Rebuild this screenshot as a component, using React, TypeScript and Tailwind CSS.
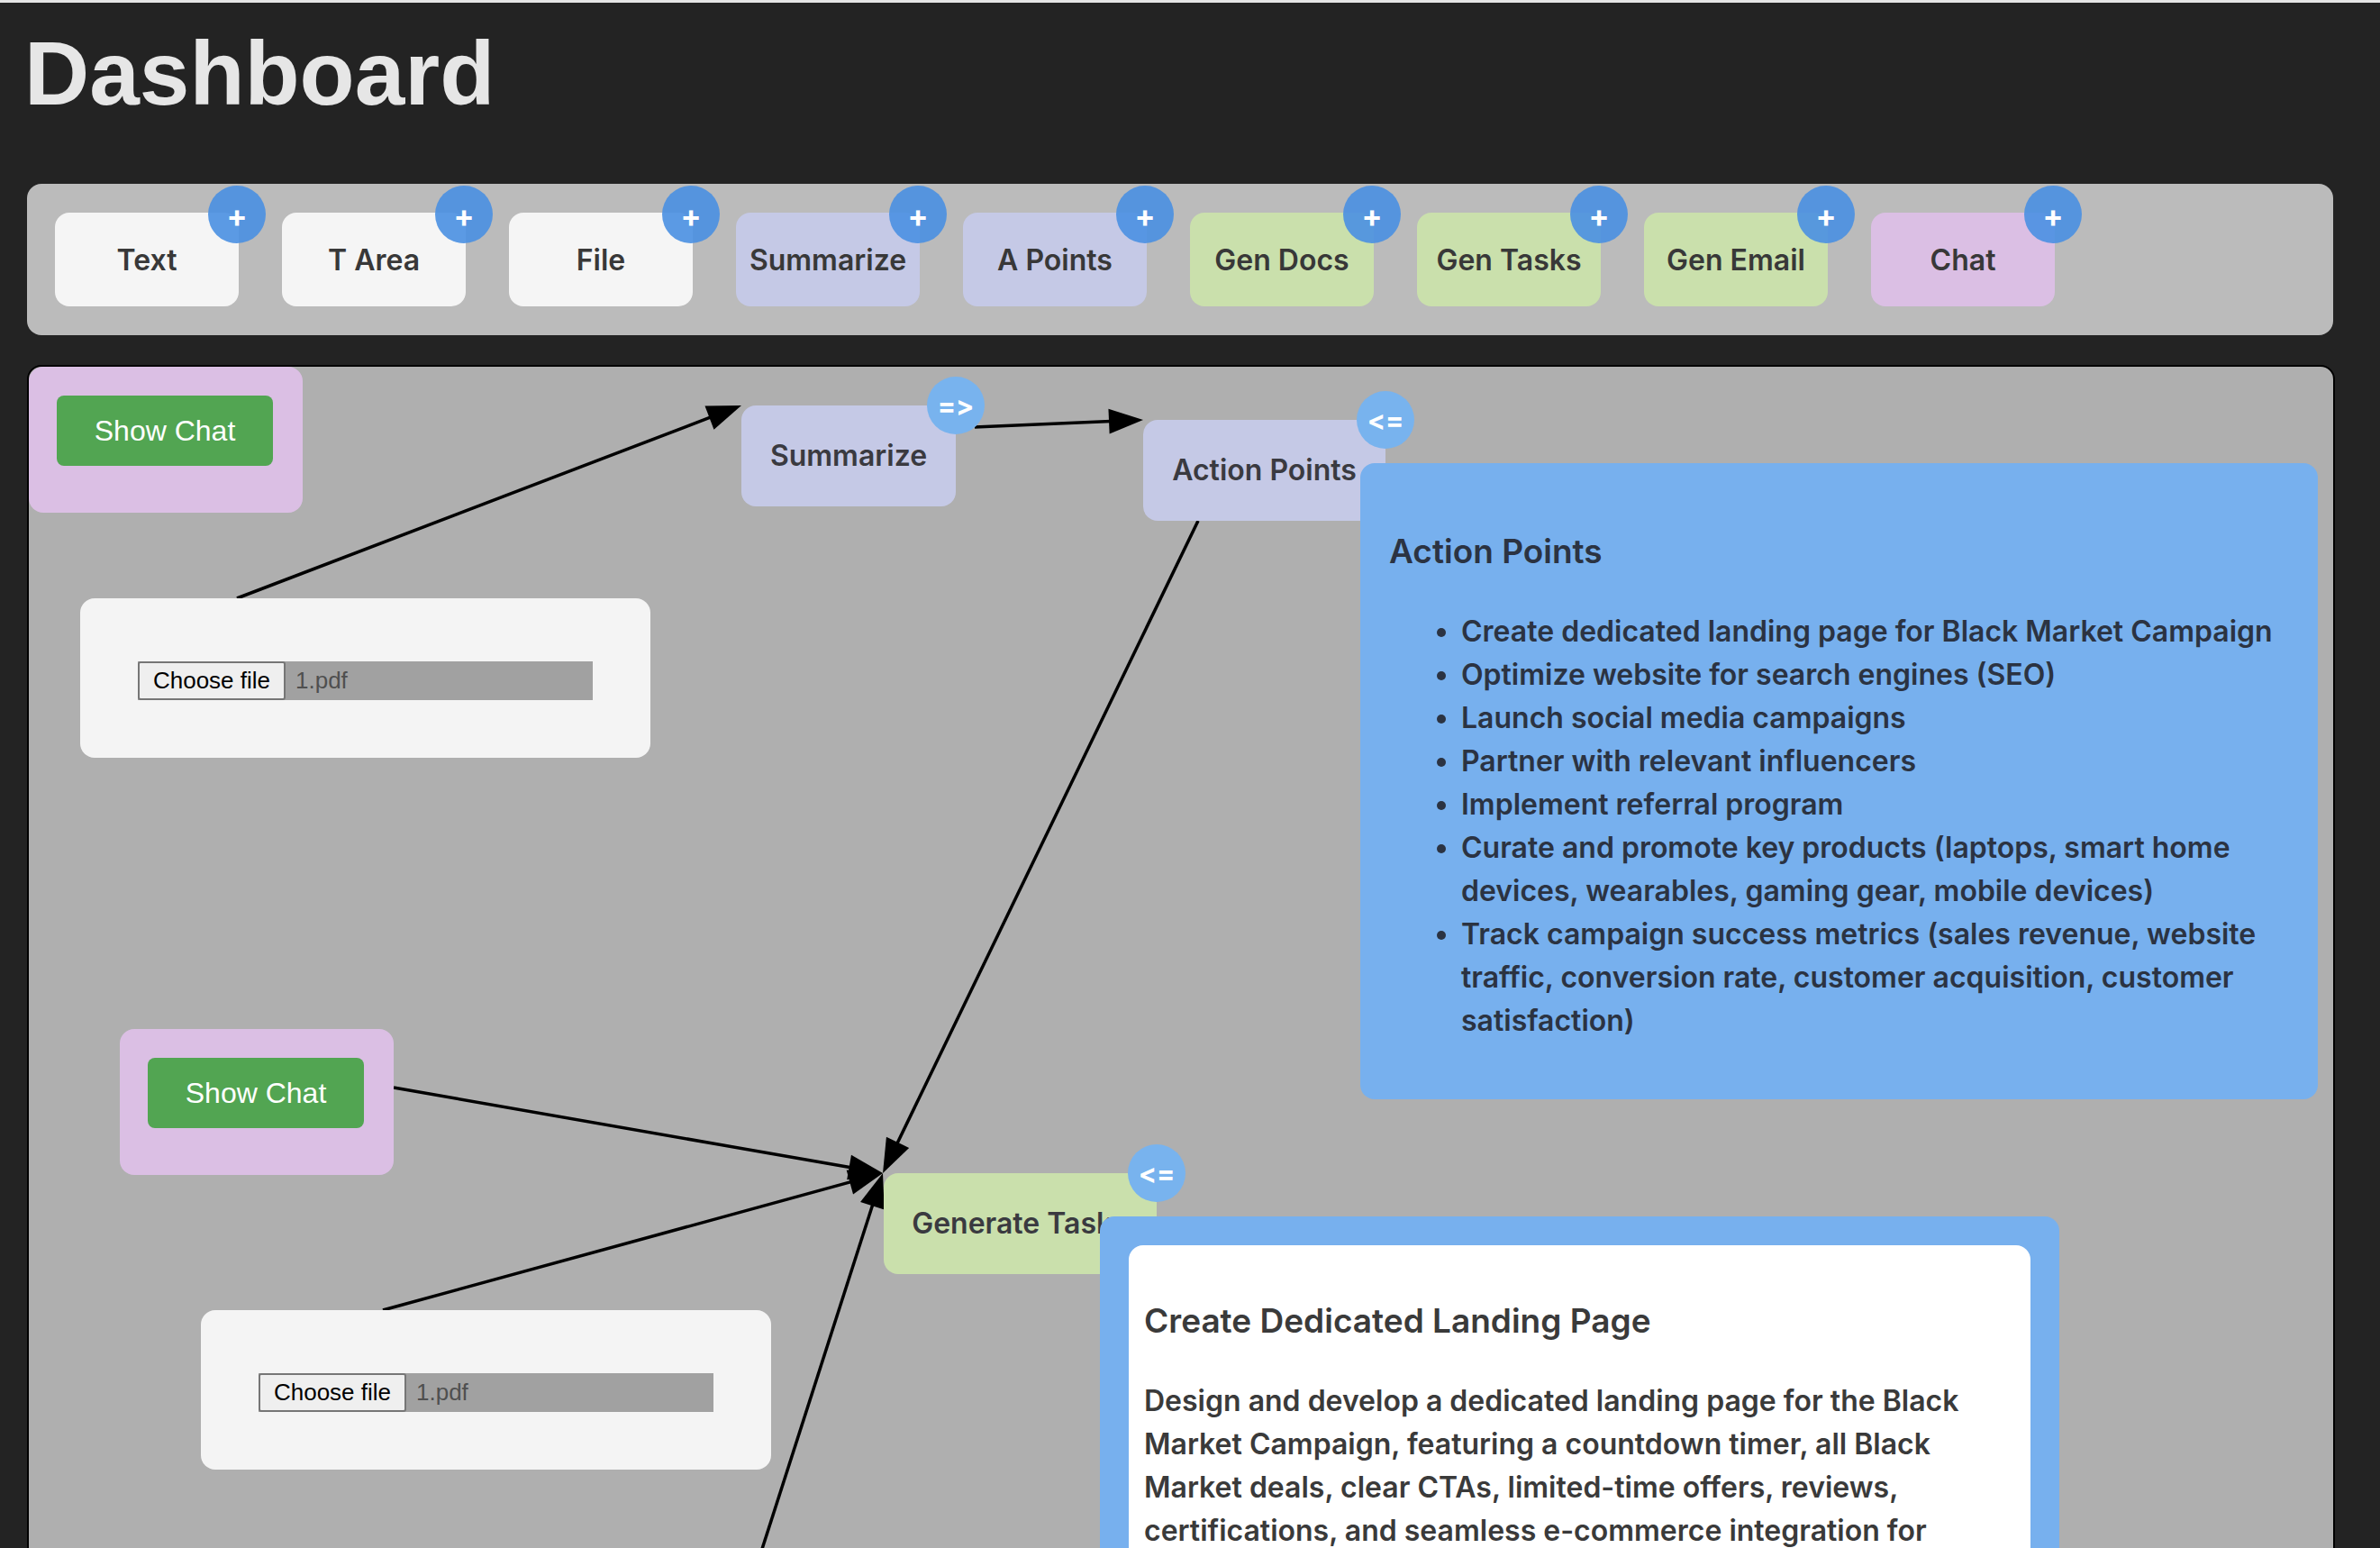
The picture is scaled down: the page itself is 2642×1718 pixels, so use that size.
import React from "react";

type Tool = { label: string; bg: string };

const TOOLS: Tool[] = [
  { label: "Text", bg: "bg-[#f5f5f5]" },
  { label: "T Area", bg: "bg-[#f5f5f5]" },
  { label: "File", bg: "bg-[#f5f5f5]" },
  { label: "Summarize", bg: "bg-[#c5c9e6]" },
  { label: "A Points", bg: "bg-[#c5c9e6]" },
  { label: "Gen Docs", bg: "bg-[#cae0ac]" },
  { label: "Gen Tasks", bg: "bg-[#cae0ac]" },
  { label: "Gen Email", bg: "bg-[#cae0ac]" },
  { label: "Chat", bg: "bg-[#dbbfe4]" },
];

const ACTION_POINTS = [
  "Create dedicated landing page for Black Market Campaign",
  "Optimize website for search engines (SEO)",
  "Launch social media campaigns",
  "Partner with relevant influencers",
  "Implement referral program",
  "Curate and promote key products (laptops, smart home devices, wearables, gaming gear, mobile devices)",
  "Track campaign success metrics (sales revenue, website traffic, conversion rate, customer acquisition, customer satisfaction)",
];

// edges in canvas coordinates: [x1, y1, x2, y2]
const EDGES: [number, number, number, number][] = [
  [231, 257, 791, 43],
  [1050, 67, 1237, 59],
  [1298, 171, 948, 895],
  [405, 800, 948, 895],
  [393, 1047, 948, 895],
  [788, 1393, 948, 895],
];

function arrowHead(x1: number, y1: number, x2: number, y2: number) {
  const len = Math.hypot(x2 - x1, y2 - y1);
  const ux = (x2 - x1) / len;
  const uy = (y2 - y1) / len;
  const bx = x2 - ux * 38;
  const by = y2 - uy * 38;
  const px = -uy * 14;
  const py = ux * 14;
  return `${x2},${y2} ${bx + px},${by + py} ${bx - px},${by - py}`;
}

function ShowChatNode({ x, y }: { x: number; y: number }) {
  return (
    <div
      className="absolute w-[304px] h-[162px] rounded-2xl bg-[#dbbfe4] pl-[31px] pt-[32px]"
      style={{ left: x, top: y }}
    >
      <button className="w-[240px] h-[78px] rounded-lg bg-[#52a552] text-white text-[32px] font-['Liberation_Sans',sans-serif]">
        Show Chat
      </button>
    </div>
  );
}

function FileNode({ x, y }: { x: number; y: number }) {
  return (
    <div
      className="absolute w-[633px] h-[177px] rounded-2xl bg-[#f4f4f4] px-[64px] pt-[70px]"
      style={{ left: x, top: y }}
    >
      <div className="flex items-center h-[43px] bg-[#a1a1a1] font-['Liberation_Sans',sans-serif] text-[26px]">
        <span className="h-full w-[164px] flex items-center justify-center bg-[#efefef] border-2 border-[#767676] rounded-[3px] text-black">
          Choose file
        </span>
        <span className="ml-[11px] text-[#4f4f4f]">1.pdf</span>
      </div>
    </div>
  );
}

function FlowNode({
  x,
  y,
  w,
  label,
  bg,
  badge,
}: {
  x: number;
  y: number;
  w: number;
  label: string;
  bg: string;
  badge: string;
}) {
  return (
    <div
      className={`absolute h-[112px] rounded-2xl flex items-center justify-center ${bg}`}
      style={{ left: x, top: y, width: w }}
    >
      <span className="text-[32px] font-semibold text-[#3a3a40] whitespace-nowrap">{label}</span>
      <span className="absolute -right-[32px] -top-[32px] w-[64px] h-[64px] rounded-full bg-[#78b3ee] flex items-center justify-center text-white text-[30px] font-bold z-20 [font-feature-settings:'calt'_0] [font-variant-ligatures:none]">
        {badge}
      </span>
    </div>
  );
}

export default function App() {
  return (
    <div className="w-[2642px] h-[1718px] overflow-hidden bg-[#232323] font-['Inter',sans-serif]">
      <div className="h-[3px] bg-[#e5e5e5]" />
      <h1 className="mt-[28px] ml-[27px] text-[100px] leading-none font-bold text-[#e6e6e6] font-['Liberation_Sans',sans-serif]">
        Dashboard
      </h1>

      <div className="mt-[73px] ml-[30px] w-[2560px] h-[168px] rounded-2xl bg-[#bbbbbb] flex gap-[48px] pl-[31px] pt-[32px]">
        {TOOLS.map((t) => (
          <div
            key={t.label}
            className={`relative w-[204px] h-[104px] rounded-2xl flex items-center justify-center ${t.bg}`}
          >
            <span className="text-[32px] font-semibold text-[#383838] pt-[2px]">{t.label}</span>
            <span className="absolute -right-[30px] -top-[30px] w-[64px] h-[64px] rounded-full bg-[#4a90e2]/90 flex items-center justify-center text-white text-[34px] font-bold leading-none pt-[4px]">
              +
            </span>
          </div>
        ))}
      </div>

      <div className="relative mt-[33px] ml-[30px] w-[2562px] h-[1400px] rounded-2xl border-2 border-black bg-[#afafaf] overflow-hidden">
        <svg className="absolute inset-0 w-full h-full" viewBox="0 0 2558 1396">
          {EDGES.map(([x1, y1, x2, y2], i) => {
            const len = Math.hypot(x2 - x1, y2 - y1);
            const ex = x2 - ((x2 - x1) / len) * 30;
            const ey = y2 - ((y2 - y1) / len) * 30;
            return (
              <g key={i}>
                <line x1={x1} y1={y1} x2={ex} y2={ey} stroke="black" strokeWidth={3.5} />
                <polygon points={arrowHead(x1, y1, x2, y2)} fill="black" />
              </g>
            );
          })}
        </svg>

        <ShowChatNode x={0} y={0} />
        <FileNode x={57} y={257} />
        <FlowNode x={791} y={43} w={238} label="Summarize" bg="bg-[#c5c9e6]" badge="=>" />
        <FlowNode x={1237} y={59} w={269} label="Action Points" bg="bg-[#c5c9e6]" badge="<=" />

        <div className="absolute left-[1478px] top-[107px] w-[1063px] h-[706px] rounded-2xl bg-[#77b0ee] px-[32px] text-[#2b3342] z-10">
          <h3 className="mt-[75px] text-[37px] leading-[45px] font-semibold">Action Points</h3>
          <ul className="mt-[43px] list-disc pl-[80px] text-[32px] leading-[48px] font-semibold">
            {ACTION_POINTS.map((a) => (
              <li key={a}>{a}</li>
            ))}
          </ul>
        </div>

        <ShowChatNode x={101} y={735} />
        <FileNode x={191} y={1047} />
        <FlowNode x={949} y={895} w={303} label="Generate Tasks" bg="bg-[#cae0ac]" badge="<=" />

        <div className="absolute left-[1189px] top-[943px] w-[1065px] h-[600px] rounded-2xl bg-[#77b0ee] p-[32px] z-10">
          <div className="h-full rounded-2xl bg-white px-[17px] text-[#3a3a3a]">
            <h3 className="pt-[61px] text-[37px] leading-[45px] font-semibold">Create Dedicated Landing Page</h3>
            <p className="mt-[43px] text-[32px] leading-[48px] font-semibold">
              Design and develop a dedicated landing page for the Black Market Campaign, featuring a countdown
              timer, all Black Market deals, clear CTAs, limited-time offers, reviews, certifications, and seamless
              e-commerce integration for smooth purchasing.
            </p>
          </div>
        </div>
      </div>
    </div>
  );
}
